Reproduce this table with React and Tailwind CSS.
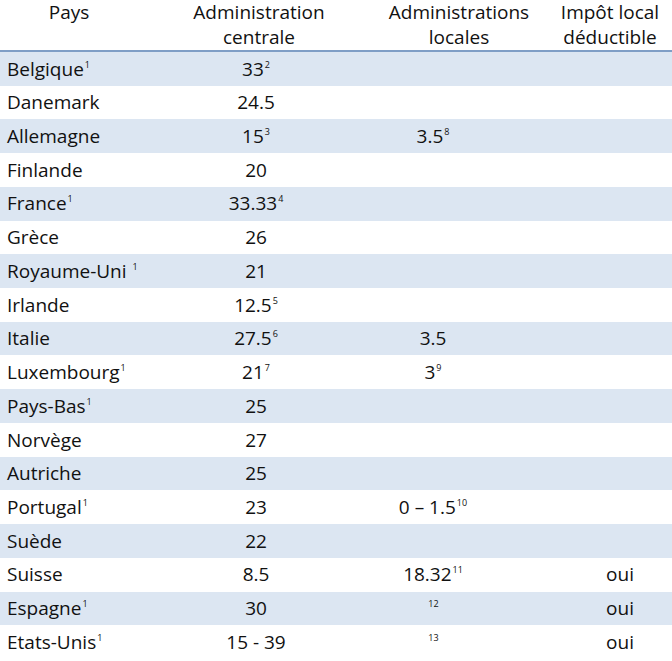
import React from 'react';

const rows = [
  { pays: 'Belgique', pn: '1', c: '33', cn: '2' },
  { pays: 'Danemark', c: '24.5' },
  { pays: 'Allemagne', c: '15', cn: '3', l: '3.5', ln: '8' },
  { pays: 'Finlande', c: '20' },
  { pays: 'France', pn: '1', c: '33.33', cn: '4' },
  { pays: 'Grèce', c: '26' },
  { pays: 'Royaume-Uni ', pn: '1', c: '21' },
  { pays: 'Irlande', c: '12.5', cn: '5' },
  { pays: 'Italie', c: '27.5', cn: '6', l: '3.5' },
  { pays: 'Luxembourg', pn: '1', c: '21', cn: '7', l: '3', ln: '9' },
  { pays: 'Pays-Bas', pn: '1', c: '25' },
  { pays: 'Norvège', c: '27' },
  { pays: 'Autriche', c: '25' },
  { pays: 'Portugal', pn: '1', c: '23', l: '0 – 1.5', ln: '10' },
  { pays: 'Suède', c: '22' },
  { pays: 'Suisse', c: '8.5', l: '18.32', ln: '11', d: 'oui' },
  { pays: 'Espagne', pn: '1', c: '30', l: '', ln: '12', d: 'oui' },
  { pays: 'Etats-Unis', pn: '1', c: '15 - 39', l: '', ln: '13', d: 'oui' },
];

const Note = ({ n }) =>
  n ? <sup className="text-[9px] top-[-0.9em] ml-[1px]">{n}</sup> : null;

const cols = 'grid grid-cols-[138px_242px_150px_142px]';

export default function App() {
  return (
    <div
      className="w-[672px] h-[661px] bg-white text-[#111111] text-[19px] overflow-hidden"
      style={{ fontFamily: '"Open Sans", "Noto Sans", sans-serif' }}
    >
      <div className={`${cols} h-[52px] leading-[25px] text-center border-b-2 border-[#7f9ec6]`}>
        <div>Pays</div>
        <div>Administration<br />centrale</div>
        <div className="pl-[8px]">Administrations<br />locales</div>
        <div className="pl-[18px]">Impôt local<br />déductible</div>
      </div>
      {rows.map((r, i) => (
        <div
          key={r.pays}
          className={`${cols} h-[33.72px] items-center ${i % 2 === 0 ? 'bg-[#dce6f2]' : 'bg-white'}`}
        >
          <div className="pl-[7px] whitespace-nowrap">
            {r.pays}
            <Note n={r.pn} />
          </div>
          <div className="text-center pr-[6px]">
            {r.c}
            <Note n={r.cn} />
          </div>
          <div className="text-center pr-[44px] whitespace-nowrap">
            {r.l}
            <Note n={r.ln} />
          </div>
          <div className="text-center pl-[38px]">{r.d}</div>
        </div>
      ))}
    </div>
  );
}
